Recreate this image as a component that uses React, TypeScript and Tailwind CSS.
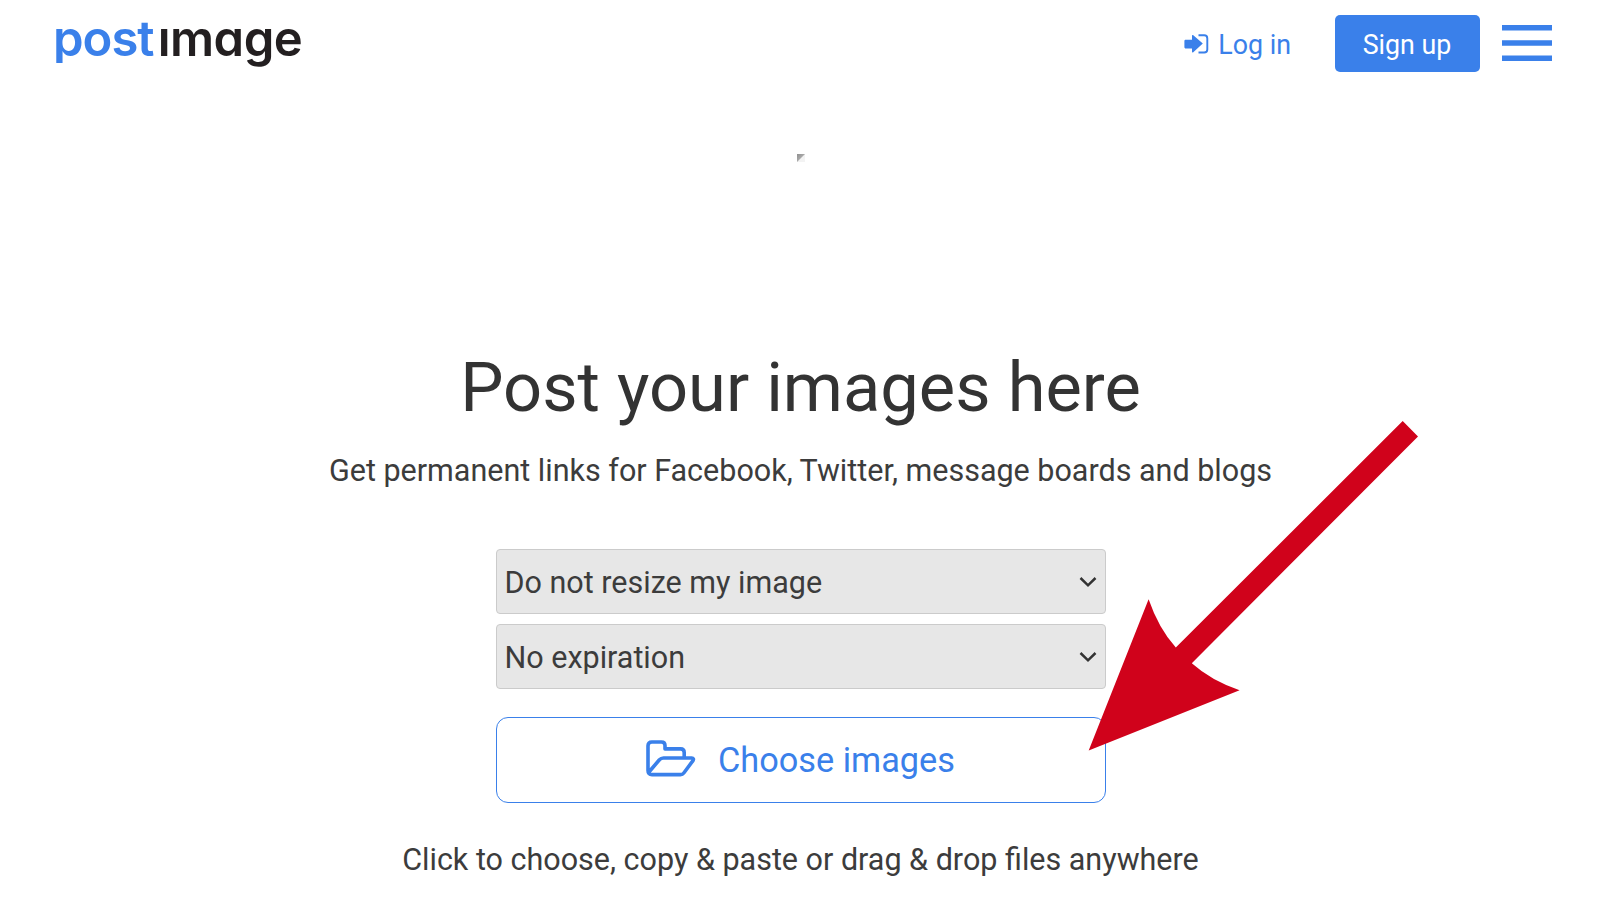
const BLUE = "#3a80ea";

function Logo() {
  return (
    <a
      className="flex h-[78px] pl-[53px] font-['Inter',sans-serif] text-[49px] leading-[78px] font-semibold tracking-[-1px] [font-feature-settings:'cv11']"
      aria-label="postimage"
    >
      <span className="text-[#3a80ea] [clip-path:inset(0_0_15px_0)]">post</span>
      <span className="ml-[4px] tracking-[-0.5px] text-[#231f20]">
        <span className="inline-block [clip-path:inset(28px_0_0_0)]">i</span>mage
      </span>
    </a>
  );
}

function SignInIcon() {
  return (
    <svg width="25" height="20" viewBox="0 0 25 20" className="mr-[9px] shrink-0">
      <path
        d="M1.2 5.8H8V1.2L9 .9L18.8 9.6L9 18.6L8 18.2V14.4H1.2L.4 13.6V6.6Z"
        fill={BLUE}
      />
      <path
        d="M14.5 1.3H20.2Q23.3 1.3 23.3 4.4V15.4Q23.3 18.5 20.2 18.5H14.5"
        fill="none"
        stroke={BLUE}
        strokeWidth="1.9"
      />
    </svg>
  );
}

function FolderOpenIcon() {
  return (
    <svg width="50" height="37" viewBox="0 0 50 37" className="mt-[-3px] mr-[22px] shrink-0">
      <g fill="none" stroke={BLUE} strokeWidth="3.6" strokeLinejoin="round" strokeLinecap="round">
        <path d="M38.2 17V12.6Q38.2 8.9 34.6 8.9H19V5.6Q19 2 15.4 2H5.8Q2 2 2 5.8V30.6Q2 34.6 6 34.6H34.5Q36.6 34.6 37.8 33L47 20.6Q48.4 18.2 45.6 18H17.6Q15 18 13.2 20L3 32" />
      </g>
    </svg>
  );
}

function SelectField({ label }: { label: string }) {
  return (
    <button className="flex h-[65px] w-[610px] items-center justify-between rounded-[4px] border border-[#cbcbcb] bg-[#e7e7e7] pr-[8px] pl-[8px] text-[30.5px] text-[#3c3c3c]">
      <span className="pt-[2px]">{label}</span>
      <svg width="18" height="12" viewBox="0 0 18 12">
        <path d="M1.5 2L9 9.3L16.5 2" fill="none" stroke="#333" strokeWidth="2.5" />
      </svg>
    </button>
  );
}

function PointerArrow() {
  return (
    <svg
      className="pointer-events-none absolute top-[420px] left-[1088px]"
      width="332"
      height="332"
      viewBox="1088 420 332 332"
    >
      <path
        d="M1402.7 421L1418 436.4L1191.8 663.3Q1211 680.5 1239.6 690.3L1088.7 750.6L1148.6 599.2Q1158.5 628 1175.8 647.6Z"
        fill="#d0021b"
      />
    </svg>
  );
}

export default function App() {
  return (
    <div className="relative flex h-[900px] w-[1600px] flex-col overflow-hidden bg-white font-['Roboto',sans-serif]">
      <header className="flex h-[88px] items-start justify-between">
        <Logo />
        <nav className="flex h-[88px] items-center pr-[48px] text-[26.8px] text-[#3a80ea]">
          <a className="flex items-center">
            <SignInIcon />
            <span className="pt-[2px]">Log in</span>
          </a>
          <a className="mb-px ml-[43.5px] flex h-[57px] w-[145px] items-center justify-center rounded-[5px] bg-[#3a80ea] pt-[3px] text-white">
            Sign up
          </a>
          <svg width="50" height="36" viewBox="0 0 50 36" className="mb-[2px] ml-[22.5px]">
            <path d="M0 0H50V5.5H0ZM0 15.3H50V20.8H0ZM0 30.6H50V36H0Z" fill={BLUE} />
          </svg>
        </nav>
      </header>

      <main className="flex flex-col items-center pt-[65.5px] pl-px">
        <svg width="8" height="8" viewBox="0 0 8 8">
          <defs>
            <linearGradient id="corner" x1="0" y1="0" x2="1" y2="1">
              <stop offset="0" stopColor="#8f8f8f" />
              <stop offset="0.5" stopColor="#aaaaaa" />
            </linearGradient>
          </defs>
          <rect width="8" height="8" fill="#f3f3f3" />
          <path d="M0 0H8L0 8Z" fill="url(#corner)" />
        </svg>
        <h1 className="mt-[186px] text-[68.6px] leading-[80px] text-[#333]">Post your images here</h1>
        <p className="mt-[23px] text-[30.5px] leading-[40px] text-[#3c3c3c]">
          Get permanent links for Facebook, Twitter, message boards and blogs
        </p>
        <div className="mt-[58.5px] flex flex-col gap-[10px]">
          <SelectField label="Do not resize my image" />
          <SelectField label="No expiration" />
        </div>
        <button className="mt-[28px] flex h-[86px] w-[610px] items-center justify-center rounded-[12px] border-[1.5px] border-[#3a80ea] text-[34.3px] text-[#3a80ea]">
          <FolderOpenIcon />
          <span className="pt-px">Choose images</span>
        </button>
        <p className="mt-[37px] text-[30.5px] leading-[40px] text-[#3c3c3c]">
          Click to choose, copy &amp; paste or drag &amp; drop files anywhere
        </p>
      </main>

      <PointerArrow />
    </div>
  );
}
